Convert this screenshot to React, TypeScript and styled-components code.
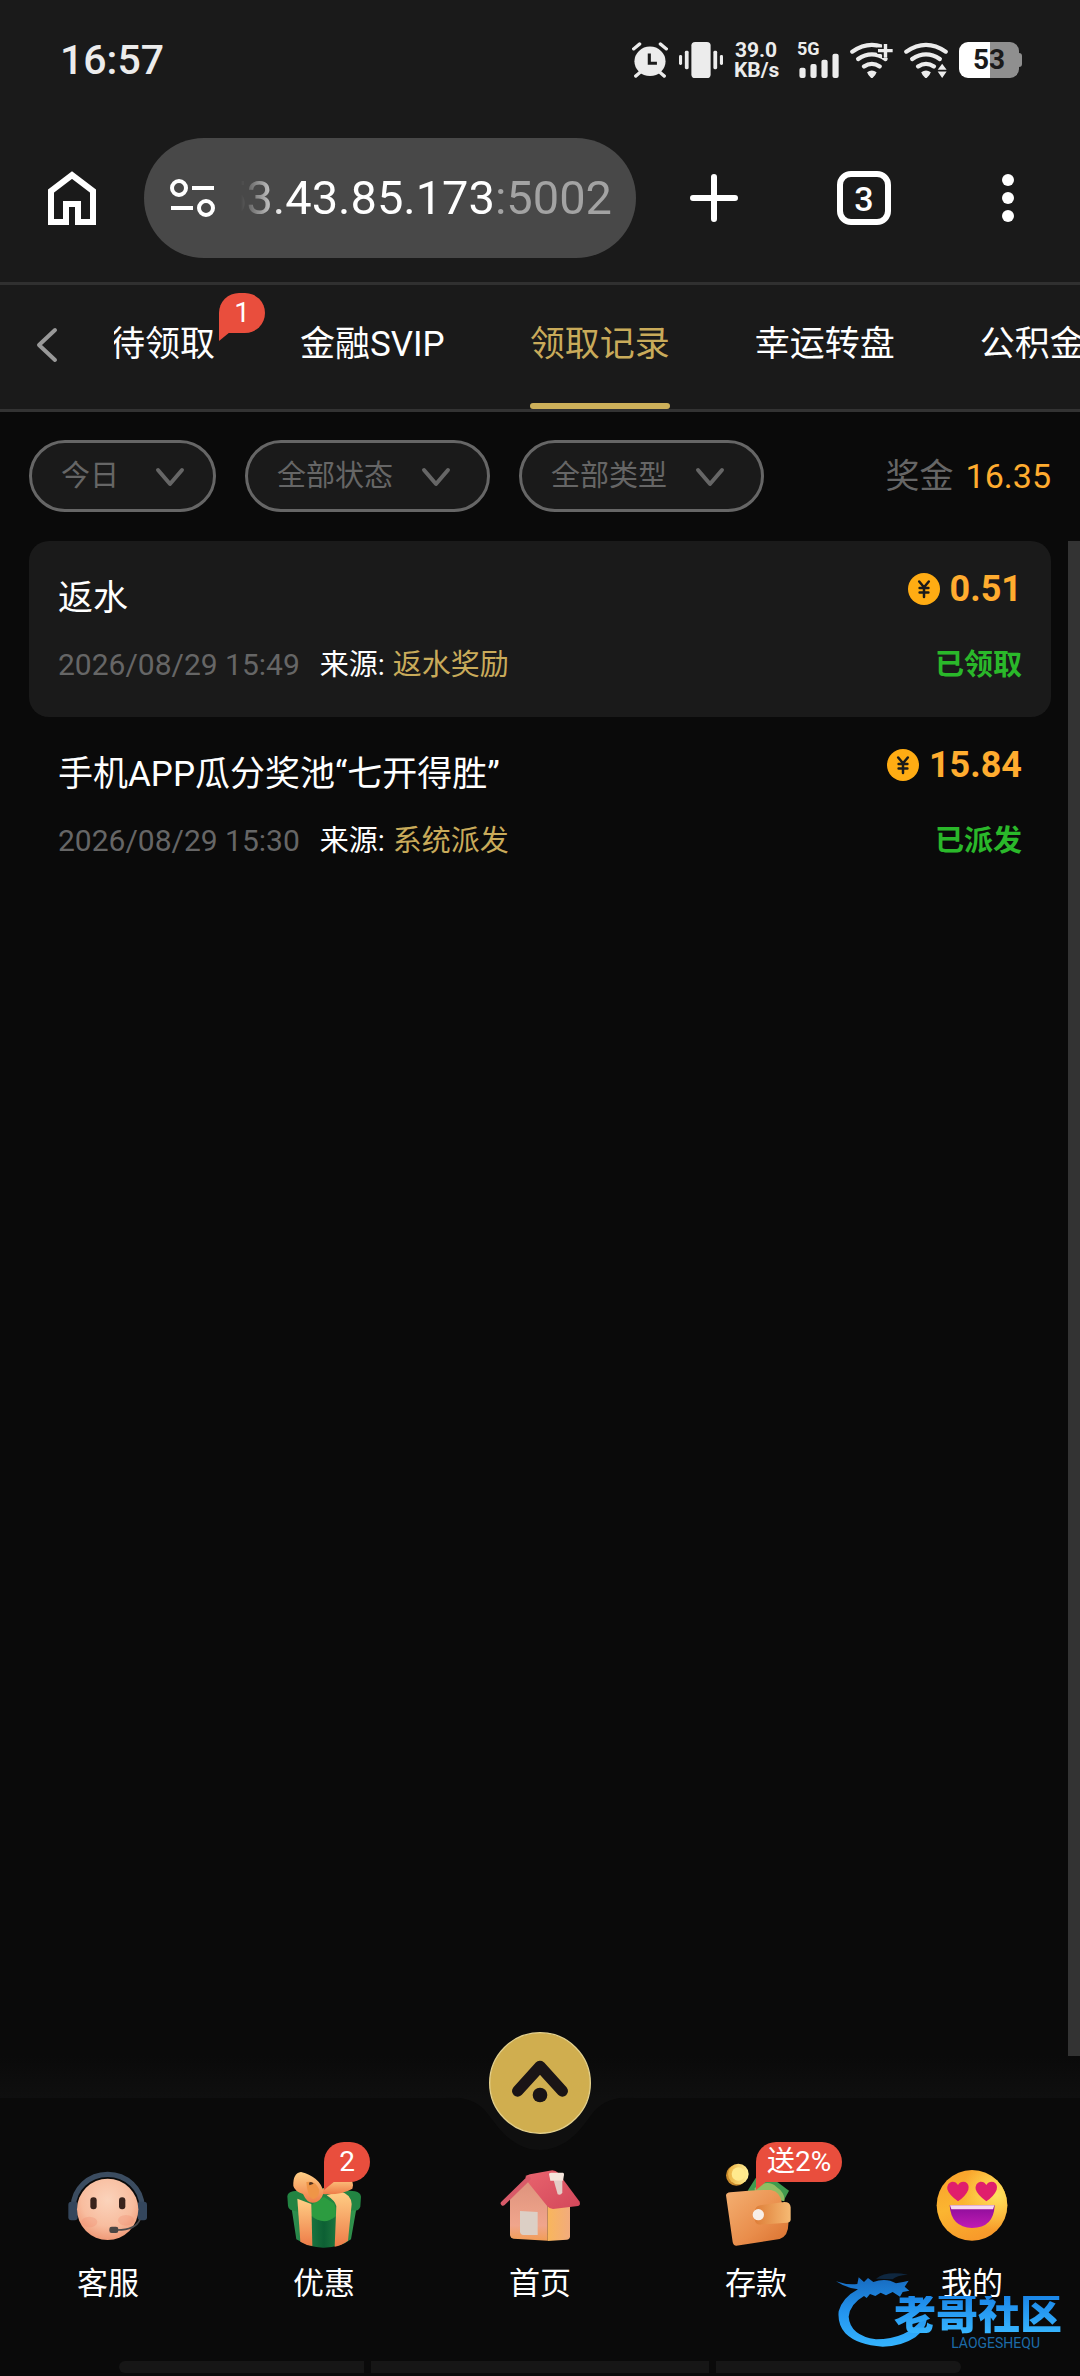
import React, { useState } from 'react';
import styled, { createGlobalStyle } from 'styled-components';

const GlobalStyle = createGlobalStyle`
  * {
    box-sizing: border-box;
  }

  body {
    margin: 0;
    background: #0a0a0a;
    color: #fff;
    font-family: Roboto, 'Noto Sans CJK SC', sans-serif;
  }

  button,
  select {
    margin: 0;
    padding: 0;
    border: 0;
    background: none;
    color: inherit;
    font: inherit;
    cursor: pointer;
  }

  a {
    color: inherit;
    text-decoration: none;
  }

  svg {
    display: block;
  }
`;

const Page = styled.div`
  min-height: 100vh;
  display: flex;
  flex-direction: column;
  overflow: hidden;
`;

const StatusBar = styled.div`
  height: 120px;
  display: flex;
  align-items: center;
  justify-content: space-between;
  padding: 0 61px 0 60px;
  background: #1a1a1a;
  color: #ececec;
`;

const Clock = styled.time`
  font-size: 41px;
  font-weight: 500;
  line-height: 48px;
`;

const StatusIcons = styled.div`
  display: flex;
  align-items: center;
  gap: 11px;
`;

const NetSpeed = styled.div`
  width: 44px;
  margin-right: 8px;
  font-size: 21px;
  font-weight: 700;
  line-height: 20px;
  text-align: center;
`;

const Signal = styled.div`
  position: relative;
`;

const SignalLabel = styled.span`
  position: absolute;
  top: -2px;
  left: 0;
  font-size: 18px;
  font-weight: 700;
  line-height: 18px;
`;

const Battery = styled.div`
  position: relative;
  width: 60px;
  height: 36px;
  border-radius: 9px;
  background: linear-gradient(90deg, #fff 52%, #8f8f8f 52%);
  color: #1a1a1a;
  font-size: 28px;
  font-weight: 700;
  line-height: 36px;
  text-align: center;

  &::after {
    content: '';
    position: absolute;
    top: 11px;
    right: -3px;
    width: 3px;
    height: 14px;
    border-radius: 0 3px 3px 0;
    background: #8f8f8f;
  }
`;

const Toolbar = styled.div`
  display: flex;
  align-items: center;
  padding: 18px 0 24px;
  background: #1a1a1a;
`;

const HomeButton = styled.button`
  flex: 0 0 144px;
  display: flex;
  justify-content: center;
`;

const AddressBar = styled.button`
  flex: 1;
  min-width: 0;
  height: 120px;
  display: flex;
  align-items: center;
  gap: 26px;
  padding: 0 24px 0 26px;
  border-radius: 60px;
  background: #484848;
`;

const Address = styled.span`
  flex: 1;
  min-width: 0;
  display: flex;
  justify-content: flex-end;
  overflow: hidden;
  font-size: 47px;
  line-height: 64px;
  white-space: nowrap;
  mask-image: linear-gradient(90deg, transparent, #000 44px);
`;

const Port = styled.span`
  color: #a3a3a3;
`;

const ToolbarActions = styled.div`
  display: grid;
  grid-template-columns: 156px 144px 144px;
  justify-items: center;
`;

const ToolbarButton = styled.button`
  width: 56px;
  height: 56px;
  display: flex;
  align-items: center;
  justify-content: center;
`;

const TabCount = styled.span`
  width: 54px;
  height: 54px;
  border: 6px solid #fff;
  border-radius: 14px;
  font-size: 34px;
  font-weight: 500;
  line-height: 44px;
  text-align: center;
`;

const TabBar = styled.nav`
  height: 130px;
  display: flex;
  border-top: 3px solid #303030;
  border-bottom: 3px solid #333;
  background: #1a1a1a;
`;

const BackButton = styled.button`
  flex: 0 0 114px;
  display: flex;
  align-items: center;
  padding: 0 0 4px 35px;
`;

const TabScroller = styled.div`
  flex: 1;
  min-width: 0;
  overflow: hidden;
`;

const TabList = styled.div`
  height: 124px;
  display: flex;
  gap: 85px;
  margin-left: -4px;
`;

const Tab = styled.button<{ $active: boolean }>`
  position: relative;
  flex: none;
  padding-bottom: 4px;
  color: ${({ $active }) => ($active ? '#c9ab5a' : '#fff')};
  font-size: 35px;
  line-height: 48px;
  white-space: nowrap;

  &::after {
    content: '';
    position: absolute;
    right: 0;
    bottom: 0;
    left: 0;
    height: 6px;
    border-radius: 3px;
    background: ${({ $active }) => ($active ? '#cdb05a' : 'transparent')};
  }
`;

const Bubble = styled.span`
  position: absolute;
  z-index: 1;
  min-width: 46px;
  height: 40px;
  padding: 0 11px;
  border-radius: 20px 20px 20px 0;
  background: #e94e3d;
  color: #fff;
  font-size: 28px;
  line-height: 40px;
  text-align: center;
  white-space: nowrap;

  &::after {
    content: '';
    position: absolute;
    top: 39px;
    left: 0;
    border-top: 9px solid #e94e3d;
    border-right: 11px solid transparent;
  }
`;

const TabBubble = styled(Bubble)`
  top: 8px;
  left: calc(100% + 4px);
`;

const Filters = styled.div`
  display: flex;
  align-items: center;
  gap: 29px;
  padding: 28px 29px 29px;
`;

const FilterPill = styled.label<{ $wide?: boolean }>`
  position: relative;
  width: ${({ $wide }) => ($wide ? '245px' : '187px')};
  height: 72px;
  border: 3px solid #666;
  border-radius: 36px;
  background: #1a1a1a;
  color: #666;

  svg {
    position: absolute;
    top: 24px;
    right: ${({ $wide }) => ($wide ? '36px' : '28px')};
    pointer-events: none;
  }
`;

const Select = styled.select`
  appearance: none;
  width: 100%;
  height: 100%;
  padding: 0 29px;
  border-radius: 36px;
  outline: none;
  font-size: 29px;
  line-height: 40px;
`;

const Total = styled.div`
  margin-left: auto;
  display: flex;
  align-items: center;
  gap: 12px;
  color: #666;
  font-size: 34px;
  line-height: 48px;
`;

const TotalValue = styled.span`
  color: #ffac2f;
`;

const Scroller = styled.main`
  flex: 1;
  display: flex;
`;

const Records = styled.ul`
  flex: 1;
  margin: 0;
  padding: 0 17px 0 29px;
  list-style: none;
`;

const ScrollTrack = styled.div`
  width: 12px;
  background: #333;
`;

const Record = styled.li`
  height: 176px;
  display: flex;
  flex-direction: column;
  justify-content: space-between;
  padding: 24px 29px 32px;
  border-radius: 20px;

  &:nth-child(odd) {
    background: #1a1a1a;
  }
`;

const RecordRow = styled.div`
  display: flex;
  align-items: flex-start;
  justify-content: space-between;
`;

const RecordTitle = styled.h2`
  margin: 0;
  padding-top: 10px;
  font-size: 35px;
  font-weight: 400;
  line-height: 48px;
`;

const Amount = styled.div`
  display: flex;
  align-items: center;
  gap: 10px;
  color: #ffac2f;
  font-size: 36px;
  font-weight: 700;
  line-height: 48px;
`;

const Meta = styled.div`
  display: flex;
  align-items: center;
  font-size: 29px;
  line-height: 40px;
`;

const RecordDate = styled.time`
  margin-right: 20px;
  color: #666;
  font-size: 30px;
`;

const Source = styled.span`
  margin-left: 8px;
  color: #c9ab5a;
`;

const Status = styled.span`
  color: #2ab82a;
  font-size: 29px;
  font-weight: 700;
  line-height: 40px;
`;

const Footer = styled.footer`
  position: relative;
  padding-top: 42px;
  background: linear-gradient(#0a0a0a, #0f0f0f 42px, #0a0a0a 42px);
`;

const Notch = styled.svg`
  position: absolute;
  top: 41px;
  left: calc(50% - 95px);
`;

const TopButton = styled.button`
  position: absolute;
  z-index: 1;
  top: -24px;
  left: calc(50% - 51px);
  width: 102px;
  height: 102px;
  border-radius: 50%;
`;

const BottomNav = styled.nav`
  display: grid;
  grid-template-columns: repeat(5, 1fr);
  padding-top: 64px;
`;

const NavItem = styled.a`
  position: relative;
  display: flex;
  flex-direction: column;
  align-items: center;
  gap: 12px;
  font-size: 31px;
  line-height: 48px;
`;

const NavBubble = styled(Bubble)`
  top: -20px;
  left: 50%;
`;

const GestureHints = styled.div`
  display: grid;
  grid-template-columns: 245px 1fr 245px;
  gap: 7px;
  padding: 53px 119px 3px;
`;

const GestureHint = styled.span`
  height: 12px;
  background: #161616;

  &:first-child {
    border-radius: 6px 0 0 6px;
  }

  &:last-child {
    border-radius: 0 6px 6px 0;
  }
`;

const Watermark = styled.div`
  position: absolute;
  z-index: 2;
  right: 18px;
  bottom: 26px;
  width: 226px;
  height: 80px;
  pointer-events: none;
`;

const DragonMark = styled.svg`
  position: absolute;
  top: 0;
  left: 0;
`;

const WatermarkName = styled.strong`
  position: absolute;
  top: 26px;
  right: 0;
  background: linear-gradient(#1a86e8, #38b6ff);
  background-clip: text;
  color: transparent;
  font-size: 42px;
  font-weight: 900;
  line-height: 38px;
`;

const WatermarkLatin = styled.span`
  position: absolute;
  top: 66px;
  right: 22px;
  color: #1c6ba8;
  font-size: 14px;
  line-height: 14px;
`;

const tabs = [
  { name: '待领取', badge: '1' },
  { name: '金融SVIP' },
  { name: '领取记录' },
  { name: '幸运转盘' },
  { name: '公积金' },
];

const filters = [
  { label: '日期', options: ['今日', '昨日'], wide: false },
  { label: '状态', options: ['全部状态', '已领取', '已派发'], wide: true },
  { label: '类型', options: ['全部类型', '返水'], wide: true },
];

const records = [
  {
    title: '返水',
    date: '2026/08/29 15:49',
    source: '返水奖励',
    amount: '0.51',
    status: '已领取',
  },
  {
    title: '手机APP瓜分奖池“七开得胜”',
    date: '2026/08/29 15:30',
    source: '系统派发',
    amount: '15.84',
    status: '已派发',
  },
];

function WifiArcs() {
  return (
    <>
      <g fill="none" stroke="#ececec" strokeWidth="13" strokeLinecap="round">
        <path d="M7 30Q64-12 121 30" />
        <path d="M24 53Q64 24 104 53" />
        <path d="M41 76Q64 60 87 76" />
      </g>
      <path
        d="M50 94Q64 84 78 94Q75 104 66 112Q64 114 62 112Q53 104 50 94Z"
        fill="#ececec"
      />
    </>
  );
}

function AlarmIcon() {
  return (
    <svg width="36" height="36" viewBox="0 0 104 110" preserveAspectRatio="none">
      <g stroke="#ececec" strokeWidth="10" strokeLinecap="round">
        <path d="M5 21L22 6M82 6L99 21M11 104L24 92M80 92L93 104" />
      </g>
      <circle cx="52" cy="59" r="45" fill="#ececec" />
      <path d="M50 35V65H72" fill="none" stroke="#1a1a1a" strokeWidth="9" />
    </svg>
  );
}

function VibrateIcon() {
  return (
    <svg
      width="44"
      height="36"
      viewBox="0 0 128 110"
      preserveAspectRatio="none"
      fill="#ececec"
    >
      <rect x="36" width="56" height="110" rx="11" />
      <rect x="17" y="27" width="11" height="56" rx="4" />
      <rect x="100" y="27" width="11" height="56" rx="4" />
      <rect y="40" width="9" height="30" rx="4" />
      <rect x="119" y="40" width="9" height="30" rx="4" />
    </svg>
  );
}

function ChevronDown() {
  return (
    <svg width="30" height="20" viewBox="0 0 30 20" fill="none">
      <path
        d="M3 3L15 17L27 3"
        stroke="#666"
        strokeWidth="4"
        strokeLinecap="round"
        strokeLinejoin="round"
      />
    </svg>
  );
}

function CoinIcon() {
  return (
    <svg width="32" height="32" viewBox="0 0 320 320">
      <circle cx="160" cy="160" r="160" fill="#ffac13" />
      <path
        d="M112 85L160 142L208 85M160 142V240M116 150H204M116 196H204"
        fill="none"
        stroke="#1a1a1a"
        strokeWidth="25"
        strokeLinecap="round"
      />
    </svg>
  );
}

function ServiceIcon() {
  return (
    <svg width="86" height="86" viewBox="0 0 258 258">
      <defs>
        <radialGradient id="face" cx="0.5" cy="0.35" r="0.65">
          <stop offset="0" stopColor="#fbd3bb" />
          <stop offset="0.65" stopColor="#f8bd9f" />
          <stop offset="1" stopColor="#f09a78" />
        </radialGradient>
      </defs>
      <path
        d="M25 135A103 98 0 0 1 231 135"
        fill="none"
        stroke="#3b4c60"
        strokeWidth="16"
      />
      <rect x="10" y="119" width="28" height="56" rx="9" fill="#34465c" />
      <rect x="218" y="119" width="28" height="56" rx="9" fill="#34465c" />
      <circle cx="128" cy="142" r="92" fill="url(#face)" />
      <ellipse cx="73" cy="180" rx="24" ry="16" fill="#f08f74" opacity="0.35" />
      <ellipse cx="183" cy="175" rx="24" ry="16" fill="#f08f74" opacity="0.35" />
      <rect x="76" y="106" width="19" height="36" rx="9" fill="#39231c" />
      <rect x="162" y="106" width="19" height="36" rx="9" fill="#39231c" />
      <path
        d="M156 204Q212 204 225 172"
        fill="none"
        stroke="#4b4a4c"
        strokeWidth="5"
      />
      <rect x="133" y="194" width="27" height="19" rx="7" fill="#4a4543" />
    </svg>
  );
}

function GiftIcon() {
  return (
    <svg width="86" height="86" viewBox="0 0 258 258">
      <defs>
        <linearGradient id="giftBody" x1="0" x2="1">
          <stop offset="0" stopColor="#2f9150" />
          <stop offset="0.5" stopColor="#0d6034" />
          <stop offset="1" stopColor="#35984f" />
        </linearGradient>
        <linearGradient id="ribbon" x1="0" x2="0" y1="0" y2="1">
          <stop offset="0" stopColor="#ffcf86" />
          <stop offset="1" stopColor="#ee7c48" />
        </linearGradient>
      </defs>
      <path
        d="M32 140L46 232Q88 258 129 257Q178 257 210 232L226 140Z"
        fill="url(#giftBody)"
      />
      <path
        d="M19 103Q20 91 36 88L124 78L222 88Q239 92 240 104L238 134Q232 149 216 145L176 157Q154 175 129 177Q101 174 85 158L42 147Q23 146 21 132Z"
        fill="#228442"
      />
      <path
        d="M129 105L158 124Q165 131 164 162Q146 178 129 178Q106 176 91 160L92 132Q94 124 105 118Z"
        fill="#2c9c40"
      />
      <path d="M49 110L91 126L94 252Q74 249 58 239Z" fill="url(#ribbon)" />
      <path
        d="M137 100L177 88Q210 97 212 126L201 236Q181 251 161 254L166 132Q162 116 137 100Z"
        fill="url(#ribbon)"
      />
      <path
        d="M122 84Q165 40 202 48Q222 58 214 80Q180 100 124 96Z"
        fill="url(#ribbon)"
      />
      <path
        d="M60 30Q35 34 37 72Q41 88 66 96Q82 132 108 119Q128 108 127 88Q116 44 60 30Z"
        fill="url(#ribbon)"
      />
      <path
        d="M76 60Q104 54 115 84Q113 109 96 112Q78 102 76 60Z"
        fill="#ef9547"
      />
      <path d="M84 62Q92 57 98 65L85 70Z" fill="#53331e" />
    </svg>
  );
}

function HouseIcon() {
  return (
    <svg width="86" height="86" viewBox="0 0 258 258">
      <defs>
        <linearGradient id="roof" x1="0" x2="1" y1="0" y2="1">
          <stop offset="0" stopColor="#e8646e" />
          <stop offset="1" stopColor="#d3475a" />
        </linearGradient>
        <linearGradient id="front" x1="0" x2="0" y1="0" y2="1">
          <stop offset="0" stopColor="#dd927c" />
          <stop offset="0.75" stopColor="#f0a58c" />
          <stop offset="1" stopColor="#f29d56" />
        </linearGradient>
        <linearGradient id="side" x1="0" x2="1" y1="0" y2="0">
          <stop offset="0" stopColor="#f9b65c" />
          <stop offset="1" stopColor="#f2ab7c" />
        </linearGradient>
      </defs>
      <path
        d="M39 104L95 52L152 120V236L50 230Q40 228 39 219Z"
        fill="url(#front)"
      />
      <path d="M152 130L219 124V224Q218 232 209 233L152 237Z" fill="url(#side)" />
      <path d="M69 147L122 150V219H79Q70 218 69 209Z" fill="#dccfc5" />
      <path
        d="M85 45Q90 39 99 37L166 25Q176 25 184 33L248 119Q251 130 243 132L168 141Q158 141 151 133L94 62Z"
        fill="url(#roof)"
      />
      <path
        d="M94 50L18 124"
        fill="none"
        stroke="#d85a68"
        strokeWidth="14"
        strokeLinecap="round"
      />
      <path d="M170 55H196V92Q191 101 182 97Z" fill="#e3cdc6" />
      <path d="M156 36Q157 32 163 32H198Q202 33 201 39L198 56H160Z" fill="#f5e5dc" />
    </svg>
  );
}

function WalletIcon() {
  return (
    <svg width="86" height="86" viewBox="0 0 258 258">
      <defs>
        <linearGradient id="wallet" x1="0" x2="1" y1="0" y2="1">
          <stop offset="0" stopColor="#f4b072" />
          <stop offset="0.6" stopColor="#e98d4b" />
          <stop offset="1" stopColor="#d9702e" />
        </linearGradient>
        <linearGradient id="strap" x1="0" x2="1">
          <stop offset="0" stopColor="#de7d37" />
          <stop offset="1" stopColor="#f6ba73" />
        </linearGradient>
        <linearGradient id="coin" x1="0" x2="1">
          <stop offset="0" stopColor="#ecb243" />
          <stop offset="1" stopColor="#fff09a" />
        </linearGradient>
      </defs>
      <path d="M104 86L128 48L190 58L228 86L213 114L150 100Z" fill="#3f9a4e" />
      <path d="M125 78Q165 50 190 74Q218 94 214 118L125 100Z" fill="#90bd62" />
      <path
        d="M39 100Q40 92 52 91Q125 82 174 84Q203 90 207 124L226 180Q228 222 200 231L70 251Q61 251 59 240Z"
        fill="url(#wallet)"
      />
      <path
        d="M125 152Q125 132 142 130L214 120Q232 120 233 136V174Q231 182 222 182L141 188Q125 187 125 170Z"
        fill="url(#strap)"
      />
      <circle cx="136" cy="158" r="17" fill="#f8efe8" />
      <ellipse cx="70" cy="40" rx="31" ry="31" fill="#c98a2c" />
      <ellipse cx="76" cy="36" rx="31" ry="31" fill="url(#coin)" />
      <ellipse cx="76" cy="36" rx="20" ry="20" fill="#ffe98d" />
    </svg>
  );
}

function LoveIcon() {
  return (
    <svg width="86" height="86" viewBox="0 0 258 258">
      <defs>
        <linearGradient id="love" x1="0.1" x2="0.5" y1="0" y2="1">
          <stop offset="0" stopColor="#f9a02b" />
          <stop offset="0.5" stopColor="#fbb531" />
          <stop offset="1" stopColor="#f89a2a" />
        </linearGradient>
        <radialGradient id="loveShine" cx="0.85" cy="0.35" r="0.5">
          <stop offset="0" stopColor="#ffe15e" />
          <stop offset="1" stopColor="#ffe15e" stopOpacity="0" />
        </radialGradient>
        <linearGradient id="mouth" x1="0" x2="0" y1="0" y2="1">
          <stop offset="0" stopColor="#8a0d99" />
          <stop offset="1" stopColor="#c11bb4" />
        </linearGradient>
        <path
          id="heart"
          d="M0 31Q-27 12-32-5Q-34-24-18-28Q-6-29 0-18Q8-31 22-27Q35-21 31-4Q24 14 0 31Z"
        />
      </defs>
      <circle cx="129" cy="130" r="106" fill="url(#love)" />
      <circle cx="129" cy="130" r="106" fill="url(#loveShine)" />
      <use href="#heart" x="87" y="87" fill="#e01e6c" />
      <use href="#heart" x="172" y="87" fill="#e01e6c" />
      <path d="M62 130H197Q194 198 129 198Q66 196 62 130Z" fill="url(#mouth)" />
      <path d="M63 130H196L192 142H67Z" fill="#f6d9f0" />
    </svg>
  );
}

const navItems = [
  { name: '客服', icon: <ServiceIcon /> },
  { name: '优惠', icon: <GiftIcon />, badge: '2' },
  { name: '首页', icon: <HouseIcon /> },
  { name: '存款', icon: <WalletIcon />, badge: '送2%' },
  { name: '我的', icon: <LoveIcon /> },
];

function App() {
  const [activeTab, setActiveTab] = useState('领取记录');

  return (
    <Page>
      <GlobalStyle />
      <StatusBar>
        <Clock>16:57</Clock>
        <StatusIcons>
          <AlarmIcon />
          <VibrateIcon />
          <NetSpeed>
            39.0
            <br />
            KB/s
          </NetSpeed>
          <Signal>
            <SignalLabel>5G</SignalLabel>
            <svg
              width="42"
              height="36"
              viewBox="0 0 122 110"
              preserveAspectRatio="none"
              fill="#ececec"
            >
              <rect x="7" y="79" width="18" height="31" rx="6" />
              <rect x="39" y="67" width="18" height="43" rx="6" />
              <rect x="71" y="54" width="18" height="56" rx="6" />
              <rect x="103" y="36" width="18" height="74" rx="6" />
            </svg>
          </Signal>
          <svg
            width="43"
            height="36"
            viewBox="0 0 126 112"
            preserveAspectRatio="none"
          >
            <WifiArcs />
            <path d="M104 4V50M80 27H126" stroke="#1a1a1a" strokeWidth="20" />
            <path d="M104 6V49M82 27H125" stroke="#ececec" strokeWidth="10" />
          </svg>
          <svg
            width="44"
            height="36"
            viewBox="0 0 128 112"
            preserveAspectRatio="none"
          >
            <WifiArcs />
            <path d="M111 62L134 90L111 116L88 90Z" fill="#1a1a1a" />
            <path d="M98 86L111 68L124 86ZM98 92H124L111 112Z" fill="#ececec" />
          </svg>
          <Battery>53</Battery>
        </StatusIcons>
      </StatusBar>

      <Toolbar>
        <HomeButton aria-label="Home">
          <svg width="48" height="54" viewBox="0 0 48 54" fill="none">
            <path
              d="M3 51V20L24 4L45 20V51H30V33H18V51Z"
              stroke="#fff"
              strokeWidth="6"
            />
          </svg>
        </HomeButton>
        <AddressBar>
          <svg width="45" height="38" viewBox="0 0 45 38" fill="none">
            <g stroke="#fff" strokeWidth="4">
              <circle cx="9" cy="9" r="7" />
              <circle cx="36" cy="29" r="7" />
              <path d="M22 9H44M1 29H23" />
            </g>
          </svg>
          <Address>
            53.43.85.173<Port>:5002</Port>
          </Address>
        </AddressBar>
        <ToolbarActions>
          <ToolbarButton aria-label="New tab">
            <svg width="48" height="48" viewBox="0 0 48 48">
              <path
                d="M24 3V45M3 24H45"
                stroke="#fff"
                strokeWidth="6"
                strokeLinecap="round"
              />
            </svg>
          </ToolbarButton>
          <ToolbarButton aria-label="Open tabs">
            <TabCount>3</TabCount>
          </ToolbarButton>
          <ToolbarButton aria-label="Menu">
            <svg width="12" height="48" viewBox="0 0 12 48" fill="#fff">
              <circle cx="6" cy="6" r="6" />
              <circle cx="6" cy="24" r="6" />
              <circle cx="6" cy="42" r="6" />
            </svg>
          </ToolbarButton>
        </ToolbarActions>
      </Toolbar>

      <TabBar>
        <BackButton aria-label="Back">
          <svg width="24" height="36" viewBox="0 0 24 36" fill="none">
            <path
              d="M20 3L4 18L20 33"
              stroke="#999"
              strokeWidth="4"
              strokeLinecap="round"
              strokeLinejoin="round"
            />
          </svg>
        </BackButton>
        <TabScroller>
          <TabList>
            {tabs.map((tab) => (
              <Tab
                $active={tab.name === activeTab}
                key={tab.name}
                onClick={() => setActiveTab(tab.name)}
              >
                {tab.name}
                {tab.badge && <TabBubble>{tab.badge}</TabBubble>}
              </Tab>
            ))}
          </TabList>
        </TabScroller>
      </TabBar>

      <Filters>
        {filters.map((filter) => (
          <FilterPill $wide={filter.wide} key={filter.label}>
            <Select aria-label={filter.label}>
              {filter.options.map((option) => (
                <option key={option}>{option}</option>
              ))}
            </Select>
            <ChevronDown />
          </FilterPill>
        ))}
        <Total>
          奖金 <TotalValue>16.35</TotalValue>
        </Total>
      </Filters>

      <Scroller>
        <Records>
          {records.map((record) => (
            <Record key={record.date}>
              <RecordRow>
                <RecordTitle>{record.title}</RecordTitle>
                <Amount>
                  <CoinIcon />
                  {record.amount}
                </Amount>
              </RecordRow>
              <RecordRow>
                <Meta>
                  <RecordDate>{record.date}</RecordDate>
                  来源:
                  <Source>{record.source}</Source>
                </Meta>
                <Status>{record.status}</Status>
              </RecordRow>
            </Record>
          ))}
        </Records>
        <ScrollTrack />
      </Scroller>

      <Footer>
        <Notch width="190" height="54" viewBox="0 0 190 54">
          <path
            d="M0 0C35 0 40 14 49 25C61 42 77 53 95 53C113 53 129 42 141 25C150 14 155 0 190 0Z"
            fill="#0f0f0f"
          />
        </Notch>
        <TopButton aria-label="Back to top">
          <svg width="102" height="102" viewBox="0 0 306 306">
            <circle
              cx="153"
              cy="153"
              r="151"
              fill="#d0ae4f"
              stroke="#e3d08c"
              strokeWidth="4"
            />
            <path
              d="M86 177L153 103L220 177"
              fill="none"
              stroke="#1a1416"
              strokeWidth="34"
              strokeLinecap="round"
              strokeLinejoin="round"
            />
            <circle cx="153" cy="189" r="22" fill="#1a1416" />
          </svg>
        </TopButton>
        <BottomNav>
          {navItems.map((item) => (
            <NavItem href="#" key={item.name}>
              {item.icon}
              {item.badge && <NavBubble>{item.badge}</NavBubble>}
              <span>{item.name}</span>
            </NavItem>
          ))}
        </BottomNav>
        <GestureHints>
          <GestureHint />
          <GestureHint />
          <GestureHint />
        </GestureHints>
        <Watermark>
          <DragonMark width="96" height="80" viewBox="0 0 288 240">
            <defs>
              <linearGradient id="dragon" x1="0" x2="0" y1="0" y2="1">
                <stop offset="0" stopColor="#176bc0" />
                <stop offset="0.5" stopColor="#2394ee" />
                <stop offset="1" stopColor="#35b4ff" />
              </linearGradient>
            </defs>
            <path
              d="M0 34Q34 46 64 42L68 22L84 36L96 24L112 36Q150 22 180 40Q204 36 218 32L206 50L220 62L200 66L192 80L170 66L150 76L134 68L118 78L102 72L92 84L84 78Q42 102 38 140Q42 196 120 208Q212 208 258 148L272 150Q268 178 238 202Q196 230 140 230Q64 226 28 190Q4 162 8 124Q20 82 66 58Q30 54 0 34Z"
              fill="url(#dragon)"
            />
            <path
              d="M120 26Q150 2 216 14Q180 16 170 28Z"
              fill="#123a63"
              opacity="0.6"
            />
          </DragonMark>
          <WatermarkName>老哥社区</WatermarkName>
          <WatermarkLatin>LAOGESHEQU</WatermarkLatin>
        </Watermark>
      </Footer>
    </Page>
  );
}

export default App;
